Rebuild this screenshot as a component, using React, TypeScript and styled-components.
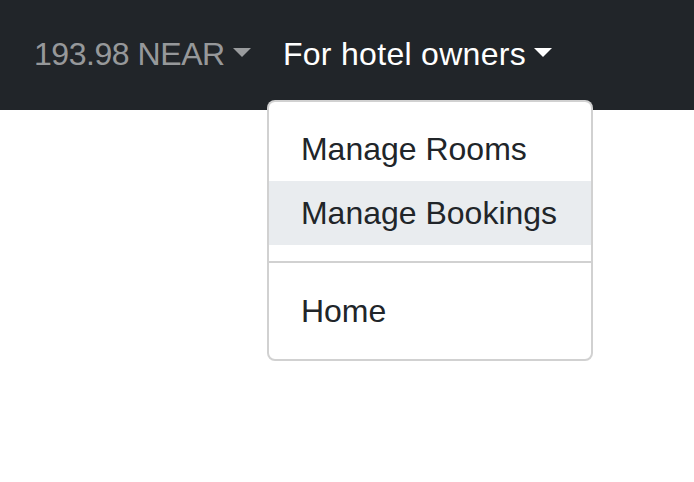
import React from "react";
import styled, { createGlobalStyle } from "styled-components";

const Global = createGlobalStyle`
  html, body { margin: 0; padding: 0; background: #ffffff; }
  body { font-family: "Liberation Sans", Arial, sans-serif; }
  * { box-sizing: border-box; }
`;

const Page = styled.div`
  min-height: 482px;
  background: #ffffff;
`;

const Navbar = styled.nav`
  position: relative;
  z-index: 1;
  background: #212529;
  height: 110px;
  padding: 14px 18px 16px;
  display: flex;
  align-items: flex-start;
`;

const NavList = styled.ul`
  list-style: none;
  margin: 0;
  padding: 0;
  display: flex;
`;

const NavItem = styled.li`
  position: relative;
`;

const NavLink = styled.a<{ $active?: boolean; $tight?: boolean }>`
  display: block;
  padding: 16px 16px;
  font-size: 32px;
  line-height: 48px;
  white-space: nowrap;
  letter-spacing: ${(p) => (p.$tight ? "-0.45px" : "0.3px")};
  color: ${(p) => (p.$active ? "#ffffff" : "rgba(255,255,255,0.55)")};
  text-decoration: none;
  cursor: pointer;
`;

const Caret = styled.span`
  display: inline-block;
  margin-left: 8.2px;
  vertical-align: 8.2px;
  width: 0;
  height: 0;
  border-top: 9.6px solid currentColor;
  border-left: 9.6px solid transparent;
  border-right: 9.6px solid transparent;
  border-bottom: 0;
`;

const Menu = styled.div`
  position: absolute;
  z-index: 10;
  top: calc(100% + 6px);
  left: 0;
  width: 326px;
  background: #ffffff;
  border: 2px solid rgba(0, 0, 0, 0.18);
  border-radius: 8px;
  padding: 15px 0 16px;
`;

const MenuItem = styled.a<{ $hover?: boolean }>`
  display: block;
  padding: 8px 32px;
  font-size: 32px;
  line-height: 48px;
  color: #212529;
  white-space: nowrap;
  text-decoration: none;
  background: ${(p) => (p.$hover ? "#e9ecef" : "transparent")};
`;

const Divider = styled.hr`
  margin: 16px 0;
  border: 0;
  border-top: 2px solid rgba(0, 0, 0, 0.18);
  height: 0;
`;

export default function App() {
  return (
    <Page>
      <Global />
      <Navbar>
        <NavList>
          <NavItem>
            <NavLink $tight>
              193.98 NEAR
              <Caret />
            </NavLink>
          </NavItem>
          <NavItem>
            <NavLink $active>
              For hotel owners
              <Caret />
            </NavLink>
            <Menu>
              <MenuItem>Manage Rooms</MenuItem>
              <MenuItem $hover>Manage Bookings</MenuItem>
              <Divider />
              <MenuItem>Home</MenuItem>
            </Menu>
          </NavItem>
        </NavList>
      </Navbar>
    </Page>
  );
}
